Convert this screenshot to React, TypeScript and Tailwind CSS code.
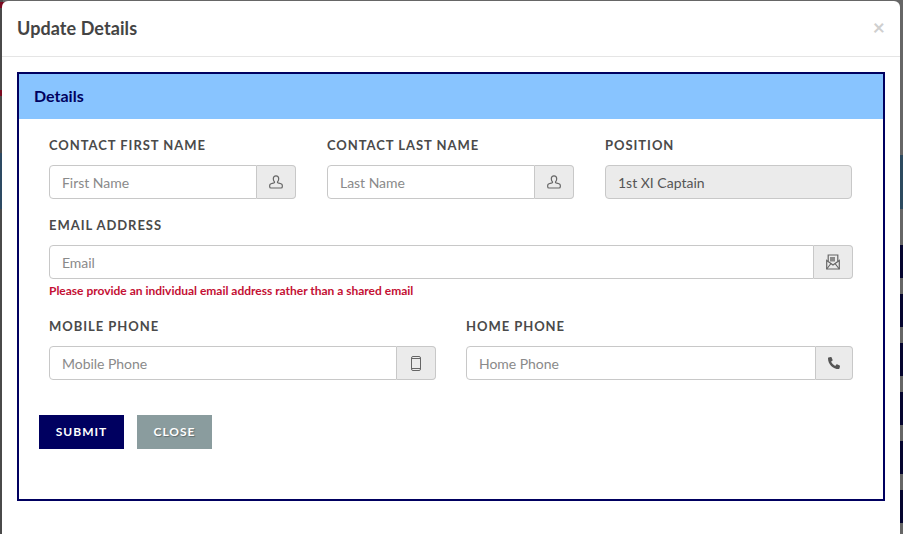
import React from "react";
import { FaPhoneAlt } from "react-icons/fa";

const PersonIcon = () => (
  <svg width="14" height="14" viewBox="0 0 14 14" fill="none" stroke="#666" strokeWidth="1.200">
    <path d="M7 .8c1.700 0 2.700 1.200 2.700 2.900 0 1.200-.4 2.200-1 2.900-.4.500-.3 1.100.3 1.300l3 .9c.9.300 1.300.8 1.300 1.600v1.300a1.300 1.300 0 0 1-1.300 1.300H2a1.300 1.300 0 0 1-1.300-1.300v-1.300c0-.8.400-1.300 1.300-1.600l3-.9c.6-.2.700-.8.300-1.300-.6-.7-1-1.700-1-2.900C4.300 2 5.300.8 7 .8z" />
  </svg>
);

const EnvelopeIcon = () => (
  <svg width="14" height="16" viewBox="0 0 14 16" fill="none" stroke="#666" strokeWidth="1.200">
    <path d="M2.200 7V1h9.600v6" />
    <rect x="4" y="3" width="5" height="4.500" fill="#8a8a8a" stroke="none" />
    <path d="M.7 6.500V15h12.600V6.500L7 11z" />
    <path d="M.7 15 5 9.500M13.300 15 9 9.500" />
  </svg>
);

const MobileIcon = () => (
  <svg width="10" height="15" viewBox="0 0 10 15" fill="none" stroke="#666" strokeWidth="1">
    <rect x=".5" y=".5" width="9" height="14" rx="1.500" />
    <path d="M.5 2.500h9M.5 12.500h9" />
  </svg>
);

const Field = ({
  label,
  placeholder,
  icon,
  addonClass,
}: {
  label: string;
  placeholder: string;
  icon: React.ReactNode;
  addonClass: string;
}) => (
  <div className="flex flex-col">
    <label className="h-5 mb-[10px] text-[13px] leading-5 font-bold uppercase tracking-[0.95px] text-[#4a4a4a]">{label}</label>
    <div className="flex h-[34px]">
      <input
        placeholder={placeholder}
        className="min-w-0 flex-1 h-full rounded-l-[4px] border border-[#c8c8c8] bg-white pl-3 text-[14px] tracking-[-0.03px] text-[#555] placeholder:text-[#8a8a8a] outline-none"
      />
      <span className={`flex h-full items-center justify-center rounded-r-[4px] border border-l-0 border-[#c8c8c8] bg-[#ebebeb] ${addonClass}`}>
        {icon}
      </span>
    </div>
  </div>
);

const navyBands = [245, 294, 343, 392, 441, 490];

export default function App() {
  return (
    <div className="relative h-[534px] w-[903px] overflow-hidden bg-[#666666] font-['Lato','Noto_Sans',sans-serif]">
      {/* darkened page behind the dialog */}
      <div className="absolute left-0 top-0 h-full w-[3px] bg-[#4a4a4a]" />
      <div className="absolute left-0 top-[90px] h-[6px] w-[3px] bg-[#7a0a20]" />
      <div className="absolute left-0 top-[2px] h-[6px] w-[6px] bg-[#7a0a20]" />
      <div className="absolute left-0 top-[153px] h-[56px] w-[3px] bg-[#2d4a63]" />
      <div className="absolute right-0 top-[155px] h-[54px] w-[4px] bg-[#2d4a5f]" />
      {navyBands.map((t) => (
        <div key={t} className="absolute right-0 h-[33px] w-[4px] bg-[#05052f]" style={{ top: t }} />
      ))}

      {/* dialog */}
      <div className="absolute left-[2px] top-[1px] h-[540px] w-[898px] rounded-t-[6px] bg-white">
        <div className="flex h-[56px] items-center justify-between border-b border-[#e5e5e5] pl-[15px] pr-[15px]">
          <h4 className="text-[18px] font-bold tracking-[0.08px] text-[#444444]">Update Details</h4>
          <span className="relative -top-[2px] text-[21px] font-bold leading-none text-[#cfcfcf]">×</span>
        </div>

        <div className="ml-[15px] mt-[15px] h-[429px] w-[868px] border-2 border-[#000060]">
          <div className="flex h-[45px] items-center bg-[#88c4ff] pb-[2px] pl-[15px] text-[16px] font-bold text-[#000060]">Details</div>

          <form className="px-[30px] pt-4">
            <div className="grid grid-cols-3 gap-x-[31px] w-[803px]">
              <Field label="Contact First Name" placeholder="First Name" icon={<PersonIcon />} addonClass="w-[39px]" />
              <Field label="Contact Last Name" placeholder="Last Name" icon={<PersonIcon />} addonClass="w-[39px]" />
              <div className="flex flex-col">
                <label className="h-5 mb-[10px] text-[13px] leading-5 font-bold uppercase tracking-[0.95px] text-[#4a4a4a]">Position</label>
                <div className="flex h-[34px] items-center rounded-[4px] border border-[#c8c8c8] bg-[#ebebeb] pl-3 text-[14px] text-[#555]">1st XI Captain</div>
              </div>
            </div>

            <div className="mt-4">
              <Field label="Email Address" placeholder="Email" icon={<EnvelopeIcon />} addonClass="w-[39px]" />
              <p className="mt-1 h-4 text-[12px] font-bold leading-4 tracking-[-0.01px] text-[#c41034]">Please provide an individual email address rather than a shared email</p>
            </div>

            <div className="mt-[17px] grid grid-cols-2 gap-x-[30px]">
              <Field label="Mobile Phone" placeholder="Mobile Phone" icon={<MobileIcon />} addonClass="w-[39px]" />
              <Field label="Home Phone" placeholder="Home Phone" icon={<FaPhoneAlt size={12} color="#555" />} addonClass="w-[37px]" />
            </div>

            <div className="-ml-[10px] mt-[35px] flex gap-[13px]">
              <button type="button" className="h-[34px] w-[85px] bg-[#000060] text-[12px] font-bold uppercase tracking-[1px] text-white">Submit</button>
              <button type="button" className="h-[34px] w-[75px] bg-[#8a9c9e] text-[12px] font-bold uppercase tracking-[1px] text-white [text-shadow:1px_1px_1px_rgba(0,0,0,0.3)]">Close</button>
            </div>
          </form>
        </div>
      </div>
    </div>
  );
}
